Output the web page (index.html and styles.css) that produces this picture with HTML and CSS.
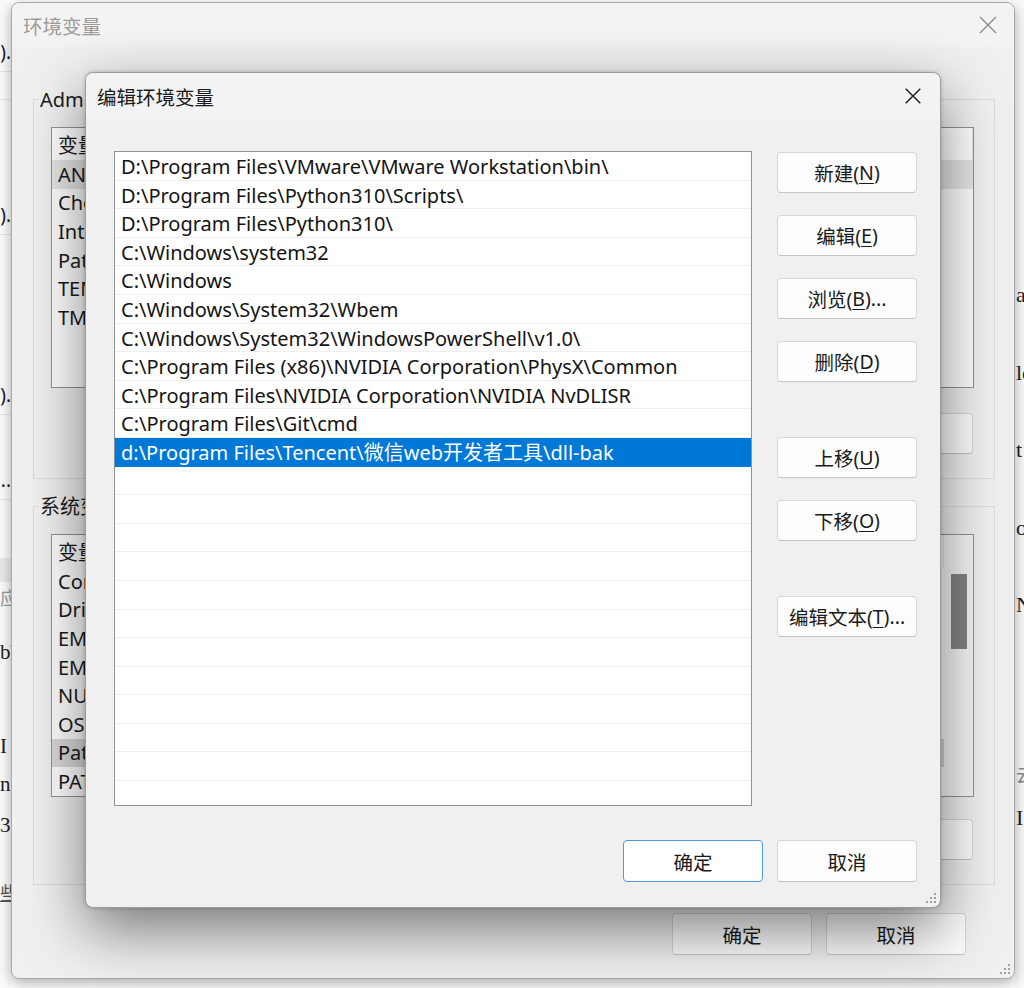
FILE: index.html
```html
<!DOCTYPE html>
<html lang="zh-CN">
<head>
<meta charset="utf-8">
<title>编辑环境变量</title>
<link rel="stylesheet" href="styles.css">
</head>
<body>
<div class="desk">
  <div class="bg-left">
    <div class="bl" style="height:32px"></div>
    <div class="bl line" style="height:40px"><span>(x86)).</span></div>
    <div class="bl line" style="height:28px"></div>
    <div class="bl" style="height:95px"></div>
    <div class="bl line" style="height:40px"><span>(x86)).</span></div>
    <div class="bl" style="height:140px"></div>
    <div class="bl line" style="height:40px"><span>(x86)).</span></div>
    <div class="bl" style="height:45px"></div>
    <div class="bl line" style="height:40px"><span>...</span></div>
    <div class="bl" style="height:58px"></div>
    <div class="bl grey" style="height:24px"></div>
    <div class="bl ctext" style="height:30px"><span>应</span></div>
    <div class="bl" style="height:20px"></div>
    <div class="bl serif" style="height:40px"><span>b\</span></div>
    <div class="bl" style="height:55px"></div>
    <div class="bl serif" style="height:38px"><span>I</span></div>
    <div class="bl serif" style="height:38px"><span>n</span></div>
    <div class="bl serif" style="height:44px"><span>3</span></div>
    <div class="bl" style="height:30px"></div>
    <div class="bl ctext under" style="height:30px"><span>些</span></div>
  </div>
  <div class="bg-right">
    <div class="br" style="height:277px"></div>
    <div class="br serif"><span>a</span></div>
    <div class="br serif"><span>le</span></div>
    <div class="br serif"><span>t</span></div>
    <div class="br serif"><span>ou</span></div>
    <div class="br serif"><span>Na</span></div>
    <div class="br" style="height:95px"></div>
    <div class="br ctext2"><span>云</span></div>
    <div class="br serif2"><span>I</span></div>
  </div>

  <section class="win outer">
    <header class="titlebar">
      <span class="title inactive">环境变量</span>
      <svg class="close outer-close" width="18" height="18" viewBox="0 0 18 18"><path d="M1 1 L17 17 M17 1 L1 17" stroke="#8c8c8c" stroke-width="1.4" fill="none"/></svg>
    </header>
    <div class="outer-body">
      <div class="group g1">
        <div class="legend">Administrator 的用户变量</div>
        <div class="olist l1">
          <div class="ohead"><span class="c1">变量</span></div>
          <div class="orow sel"><span class="c1">ANDROID_HOME</span></div>
          <div class="orow"><span class="c1">ChocolateyLastPathUpdate</span></div>
          <div class="orow"><span class="c1">IntelliJ IDEA</span></div>
          <div class="orow"><span class="c1">Path</span></div>
          <div class="orow"><span class="c1">TEMP</span></div>
          <div class="orow"><span class="c1">TMP</span></div>
        </div>
        <div class="obtns">
          <button class="btn">新建(<u>N</u>)...</button>
          <button class="btn">编辑(<u>E</u>)...</button>
          <button class="btn">删除(<u>D</u>)</button>
        </div>
      </div>
      <div class="group g2">
        <div class="legend">系统变量(<u>S</u>)</div>
        <div class="olist l2">
          <div class="olist-main">
            <div class="ohead"><span class="c1">变量</span></div>
            <div class="orow"><span class="c1">ComSpec</span></div>
            <div class="orow"><span class="c1">DriverData</span></div>
            <div class="orow"><span class="c1">EM_HOME</span></div>
            <div class="orow"><span class="c1">EMSDK</span></div>
            <div class="orow"><span class="c1">NUMBER_OF_PROCESSORS</span></div>
            <div class="orow"><span class="c1">OS</span></div>
            <div class="orow sel2"><span class="c1">Path</span></div>
            <div class="orow"><span class="c1">PATHEXT</span></div>
          </div>
          <div class="vscroll"><div class="thumb"></div></div>
        </div>
        <div class="obtns">
          <button class="btn">新建(<u>W</u>)...</button>
          <button class="btn">编辑(<u>I</u>)...</button>
          <button class="btn">删除(<u>L</u>)</button>
        </div>
      </div>
      <div class="ofooter">
        <button class="btn">确定</button>
        <button class="btn">取消</button>
      </div>
    </div>
    <svg class="grip" width="12" height="12" viewBox="0 0 12 12"><g fill="#a0a0a0"><rect x="9" y="1" width="2" height="2"/><rect x="5" y="5" width="2" height="2"/><rect x="9" y="5" width="2" height="2"/><rect x="1" y="9" width="2" height="2"/><rect x="5" y="9" width="2" height="2"/><rect x="9" y="9" width="2" height="2"/></g></svg>
  </section>

  <section class="win inner">
    <header class="titlebar ititle">
      <span class="title">编辑环境变量</span>
      <svg class="close inner-close" width="16" height="16" viewBox="0 0 16 16"><path d="M0.7 0.7 L15.3 15.3 M15.3 0.7 L0.7 15.3" stroke="#1a1a1a" stroke-width="1.4" fill="none"/></svg>
    </header>
    <div class="inner-body">
      <div class="imain">
        <div class="ilist">
          <div class="irow">D:\Program Files\VMware\VMware Workstation\bin\</div>
          <div class="irow">D:\Program Files\Python310\Scripts\</div>
          <div class="irow">D:\Program Files\Python310\</div>
          <div class="irow">C:\Windows\system32</div>
          <div class="irow">C:\Windows</div>
          <div class="irow">C:\Windows\System32\Wbem</div>
          <div class="irow">C:\Windows\System32\WindowsPowerShell\v1.0\</div>
          <div class="irow">C:\Program Files (x86)\NVIDIA Corporation\PhysX\Common</div>
          <div class="irow">C:\Program Files\NVIDIA Corporation\NVIDIA NvDLISR</div>
          <div class="irow">C:\Program Files\Git\cmd</div>
          <div class="irow selected">d:\Program Files\Tencent\微信web开发者工具\dll-bak</div>
          <div class="irow"></div>
          <div class="irow"></div>
          <div class="irow"></div>
          <div class="irow"></div>
          <div class="irow"></div>
          <div class="irow"></div>
          <div class="irow"></div>
          <div class="irow"></div>
          <div class="irow"></div>
          <div class="irow"></div>
          <div class="irow"></div>
          <div class="irow"></div>
        </div>
        <div class="ibtns">
          <button class="btn">新建(<u>N</u>)</button>
          <button class="btn">编辑(<u>E</u>)</button>
          <button class="btn">浏览(<u>B</u>)...</button>
          <button class="btn">删除(<u>D</u>)</button>
          <button class="btn sep">上移(<u>U</u>)</button>
          <button class="btn">下移(<u>O</u>)</button>
          <button class="btn sep">编辑文本(<u>T</u>)...</button>
        </div>
      </div>
      <div class="ifooter">
        <button class="btn default">确定</button>
        <button class="btn">取消</button>
      </div>
    </div>
    <svg class="grip" width="12" height="12" viewBox="0 0 12 12"><g fill="#a0a0a0"><rect x="9" y="1" width="2" height="2"/><rect x="5" y="5" width="2" height="2"/><rect x="9" y="5" width="2" height="2"/><rect x="1" y="9" width="2" height="2"/><rect x="5" y="9" width="2" height="2"/><rect x="9" y="9" width="2" height="2"/></g></svg>
  </section>
</div>
</body>
</html>
```

FILE: styles.css
```css
* { box-sizing: border-box; margin: 0; padding: 0; }
html, body { width: 1024px; height: 988px; overflow: hidden; }
body {
  background: #ffffff;
  font-family: "Noto Sans", "Noto Sans CJK SC", sans-serif;
  color: #1a1a1a;
}
.desk {
  position: relative;
  width: 1024px;
  height: 988px;
  display: flex;
  justify-content: space-between;
  overflow: hidden;
}

/* background page fragments */
.bg-left {
  width: 11px;
  height: 988px;
  overflow: hidden;
  display: flex;
  flex-direction: column;
  background: #fbfbfb;
}
.bl {
  display: flex;
  justify-content: flex-end;
  align-items: center;
  white-space: nowrap;
  font-size: 19px;
  flex: none;
}
.bl.line { border-bottom: 1px solid #e6e6e6; }
.bl.grey { background: #e9e9e9; }
.bl.ctext { color: #9a9a9a; font-size: 18px; justify-content: flex-start; }
.bl.serif { font-family: "Liberation Serif", serif; font-size: 21px; color: #222; justify-content: flex-start; }
.bl.under span { text-decoration: underline; color: #555; }
.bg-right {
  width: 9px;
  height: 988px;
  overflow: hidden;
  display: flex;
  flex-direction: column;
  background: #fafafa;
}
.br {
  flex: none;
  height: 77.5px;
  white-space: nowrap;
  font-family: "Liberation Serif", serif;
  font-size: 22px;
  line-height: 36px;
  color: #222;
  padding-left: 1px;
}
.br.ctext2 { height: 40px; font-family: "Noto Sans CJK SC", sans-serif; color: #888; font-size: 18px; line-height: 28px; }
.br.serif2 { height: 40px; }

/* windows */
.win {
  position: absolute;
  background: #f0f0f0;
  border: 1px solid #a9a9a9;
  border-radius: 8px;
  display: flex;
  flex-direction: column;
}
.outer {
  left: 11px;
  top: 2px;
  width: 1004px;
  height: 977px;
  box-shadow: 0 4px 14px rgba(0,0,0,0.32);
}
.inner {
  left: 85px;
  top: 72px;
  width: 856px;
  height: 836px;
  box-shadow: 0 22px 60px rgba(0,0,0,0.5), 0 0 4px rgba(0,0,0,0.2);
  border-color: #9c9c9c;
}
.titlebar {
  display: flex;
  align-items: center;
  height: 44px;
  padding-left: 11px;
  flex: none;
  border-radius: 8px 8px 0 0;
  background: #f3f3f3;
}
.ititle { height: 46px; }
.title {
  font-size: 19.5px;
  font-family: "Noto Sans CJK SC", sans-serif;
  color: #1a1a1a;
}
.title.inactive { color: #9b9b9b; }
.close { margin-left: auto; flex: none; }
.outer-close { margin-right: 17px; }
.inner-close { margin-right: 19px; }

.grip {
  position: absolute;
  right: 3px;
  bottom: 3px;
}

/* buttons */
.btn {
  display: flex;
  align-items: center;
  justify-content: center;
  width: 140px;
  height: 41px;
  background: #fdfdfd;
  border: 1px solid #d6d6d6;
  border-bottom-color: #c4c4c4;
  border-radius: 4px;
  font-family: "Noto Sans", "Noto Sans CJK SC", sans-serif;
  font-size: 19.5px;
  color: #1a1a1a;
  flex: none;
}
.btn u { text-underline-offset: 3px; text-decoration-thickness: 1px; }
.btn.default {
  border: 1px solid #4d9be0;
  background: #ffffff;
}

/* outer body */
.outer-body {
  padding: 52px 19px 0 21px;
  display: flex;
  flex-direction: column;
}
.group {
  border: 1px solid #dcdcdc;
  display: flex;
  flex-direction: column;
}
.g2 { margin-top: 27px; }
.legend {
  margin: -14px 0 0 5px;
  height: 28px;
  line-height: 28px;
  padding: 0 1px;
  background: #f0f0f0;
  font-size: 20px;
  width: fit-content;
}
.olist {
  margin: 13px 20px 0 17px;
  height: 261px;
  background: #ffffff;
  border: 1px solid #8e939b;
  overflow: hidden;
  font-size: 20px;
}
.olist.l2 { height: 263px; display: flex; }
.olist-main { flex: 1; min-width: 0; }
.ohead, .orow {
  display: flex;
  white-space: nowrap;
  align-items: center;
}
.ohead { height: 32px; border-right: 1px solid #e5e5e5; }
.orow { height: 28.6px; }
.orow.sel { background: #e6e6e6; }
.orow.sel2 { background: #d9d9d9; }
.c1 { width: 270px; padding-left: 6px; flex: none; }
.vscroll {
  width: 29px;
  flex: none;
  background: #f6f6f6;
  padding-top: 39px;
  display: flex;
  justify-content: center;
}
.thumb {
  width: 16px;
  height: 75px;
  background: #858585;
}
.obtns {
  display: flex;
  justify-content: flex-end;
  gap: 14px;
  margin: 25px 21px 24px 0;
}
.g2 .obtns { margin-top: 22px; margin-bottom: 24px; }
.ofooter {
  display: flex;
  justify-content: flex-end;
  gap: 14px;
  margin-top: 28px;
  margin-right: 29px;
}
.ofooter .btn { height: 42px; }

/* inner body */
.inner-body {
  flex: 1;
  display: flex;
  flex-direction: column;
  padding: 32px 23px 25px 28px;
}
.imain {
  display: flex;
  gap: 25px;
}
.ilist {
  width: 638px;
  height: 655px;
  background: #ffffff;
  border: 1px solid #8e939b;
  overflow: hidden;
  font-size: 20px;
}
.irow {
  height: 28.6px;
  line-height: 27.6px;
  padding: 1px 0 0 6px;
  border-bottom: 1px solid #efefef;
  white-space: nowrap;
  color: #141414;
}
.irow.selected {
  background: #0078d7;
  color: #ffffff;
  border-bottom-color: #0078d7;
}
.ibtns {
  display: flex;
  flex-direction: column;
  gap: 22px;
  padding-top: 1px;
}
.ibtns .btn.sep { margin-top: 33px; }
.ifooter {
  display: flex;
  justify-content: flex-end;
  gap: 14px;
  margin-top: 34px;
}
.ifooter .btn { height: 42px; }
```
